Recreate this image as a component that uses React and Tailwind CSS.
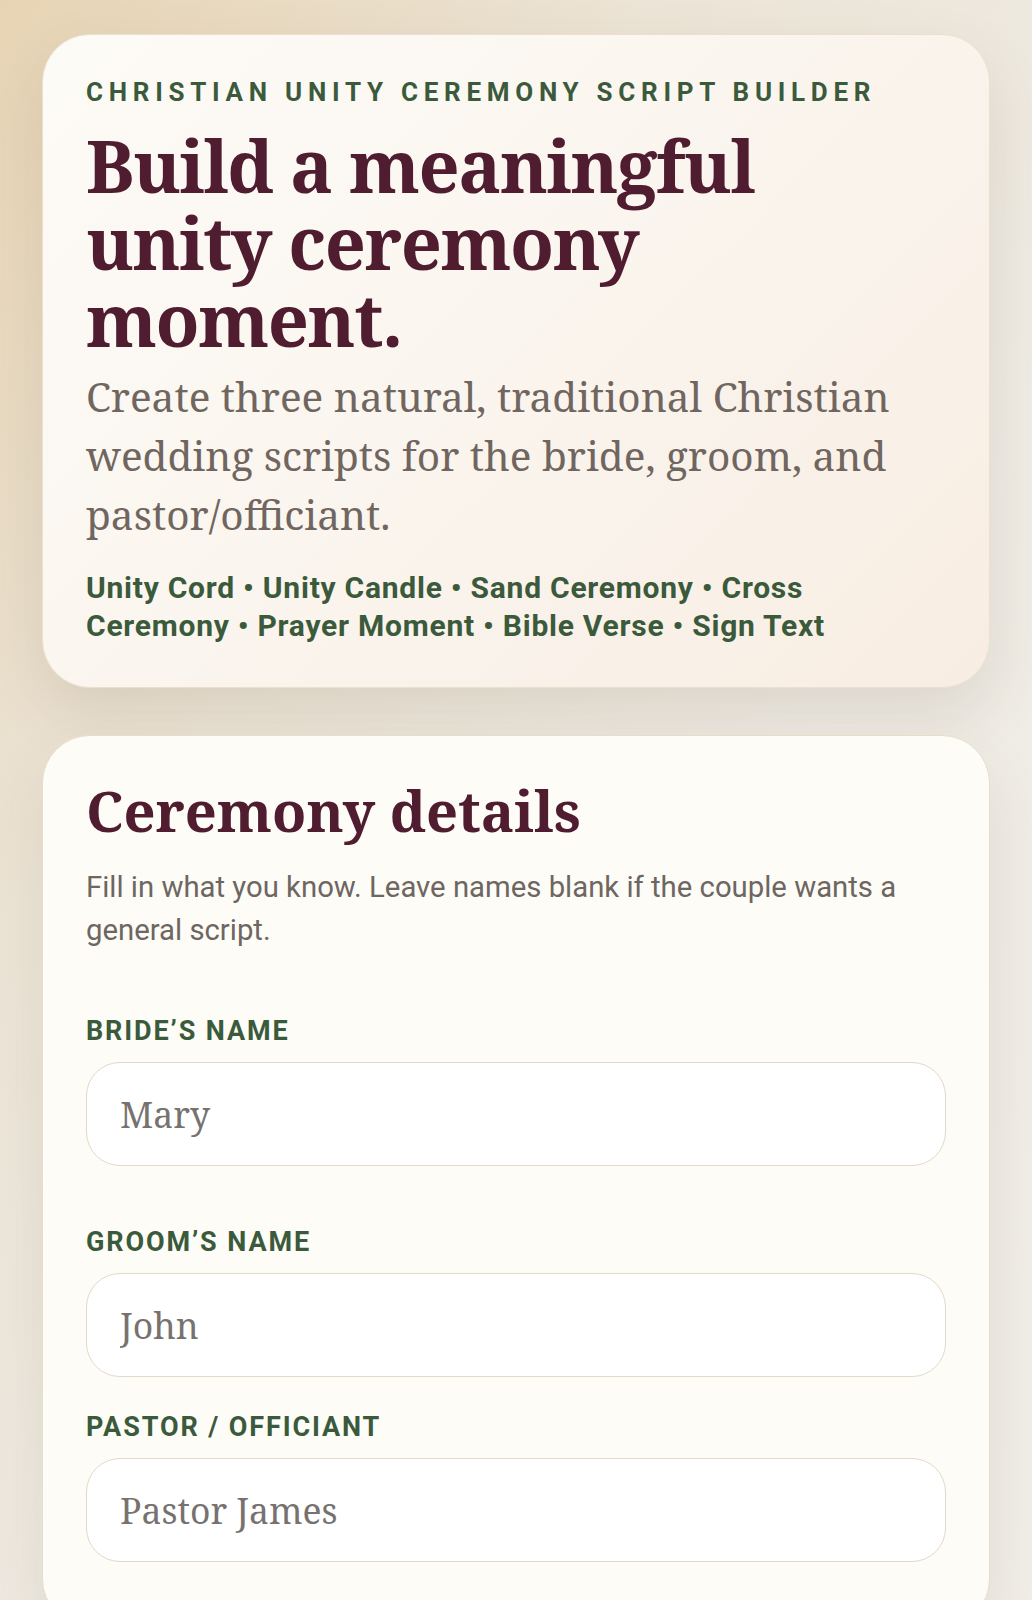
import { useState } from "react";

const serif = "font-['Noto_Serif','DejaVu_Serif',serif]";
const sans = "font-['Roboto','Liberation_Sans',sans-serif]";

const rites = ["Unity Cord", "Unity Candle", "Sand Ceremony", "Cross Ceremony", "Prayer Moment", "Bible Verse", "Sign Text"];

function Field({ label, placeholder, value, onChange, gapTop }) {
  return (
    <label className={`block ${gapTop}`}>
      <span className={`${sans} block text-[27px] leading-[30px] font-bold uppercase tracking-[0.07em] text-[#3b5a3c]`}>
        {label}
      </span>
      <input
        value={value}
        onChange={(e) => onChange(e.target.value)}
        placeholder={placeholder}
        className={`${serif} mt-[16px] block h-[104px] w-full rounded-[34px] border border-[#e3d9c8] bg-white pl-[33px] pr-6 text-[35.5px] text-[#3a2a2a] placeholder:text-[#77726f] outline-none`}
      />
    </label>
  );
}

export default function App() {
  const [bride, setBride] = useState("");
  const [groom, setGroom] = useState("");
  const [pastor, setPastor] = useState("");

  return (
    <main className="min-h-[1600px] bg-[linear-gradient(125deg,#e7d4b4_0%,#ece4d6_30%,#efece5_60%,#f1eee8_100%)] px-[42px] pt-[34px] pb-10">
      <section className="rounded-[48px] border border-[#ecdfcd] bg-[linear-gradient(135deg,#fdfbf7_0%,#faf4ed_55%,#f8ede2_100%)] px-[43px] pt-[42px] pb-[42px] shadow-[0_26px_60px_rgba(90,70,40,0.13)]">
        <p className={`${sans} text-[26px] leading-[30px] font-bold uppercase tracking-[0.22em] text-[#3b5a3c]`}>
          Christian Unity Ceremony Script Builder
        </p>
        <h1 className={`${serif} mt-[20px] text-[72px] leading-[77px] font-bold tracking-[-0.02em] text-[#4f1c30]`}>
          Build a meaningful unity ceremony moment.
        </h1>
        <p className={`${serif} mt-[9px] text-[40.5px] leading-[59px] text-[#70665f]`}>
          Create three natural, traditional Christian wedding scripts for the bride, groom, and pastor/officiant.
        </p>
        <p className={`${sans} mt-[25px] text-[30px] leading-[38px] font-bold tracking-[0.025em] text-[#3b5a3c]`}>
          {rites.join(" • ")}
        </p>
      </section>

      <section className="mt-[47px] rounded-[48px] border border-[#e8ddcb] bg-[#fdfcf7] px-[43px] pt-[44px] pb-16 shadow-[0_26px_60px_rgba(90,70,40,0.10)]">
        <h2 className={`${serif} text-[56px] leading-[60px] font-bold text-[#4f1c30]`}>Ceremony details</h2>
        <p className={`${sans} mt-[26px] text-[29.3px] leading-[43px] text-[#6d6661]`}>
          Fill in what you know. Leave names blank if the couple wants a general script.
        </p>
        <Field label="Bride’s name" placeholder="Mary" value={bride} onChange={setBride} gapTop="mt-[64px]" />
        <Field label="Groom’s name" placeholder="John" value={groom} onChange={setGroom} gapTop="mt-[61px]" />
        <Field label="Pastor / Officiant" placeholder="Pastor James" value={pastor} onChange={setPastor} gapTop="mt-[35px]" />
      </section>
    </main>
  );
}
